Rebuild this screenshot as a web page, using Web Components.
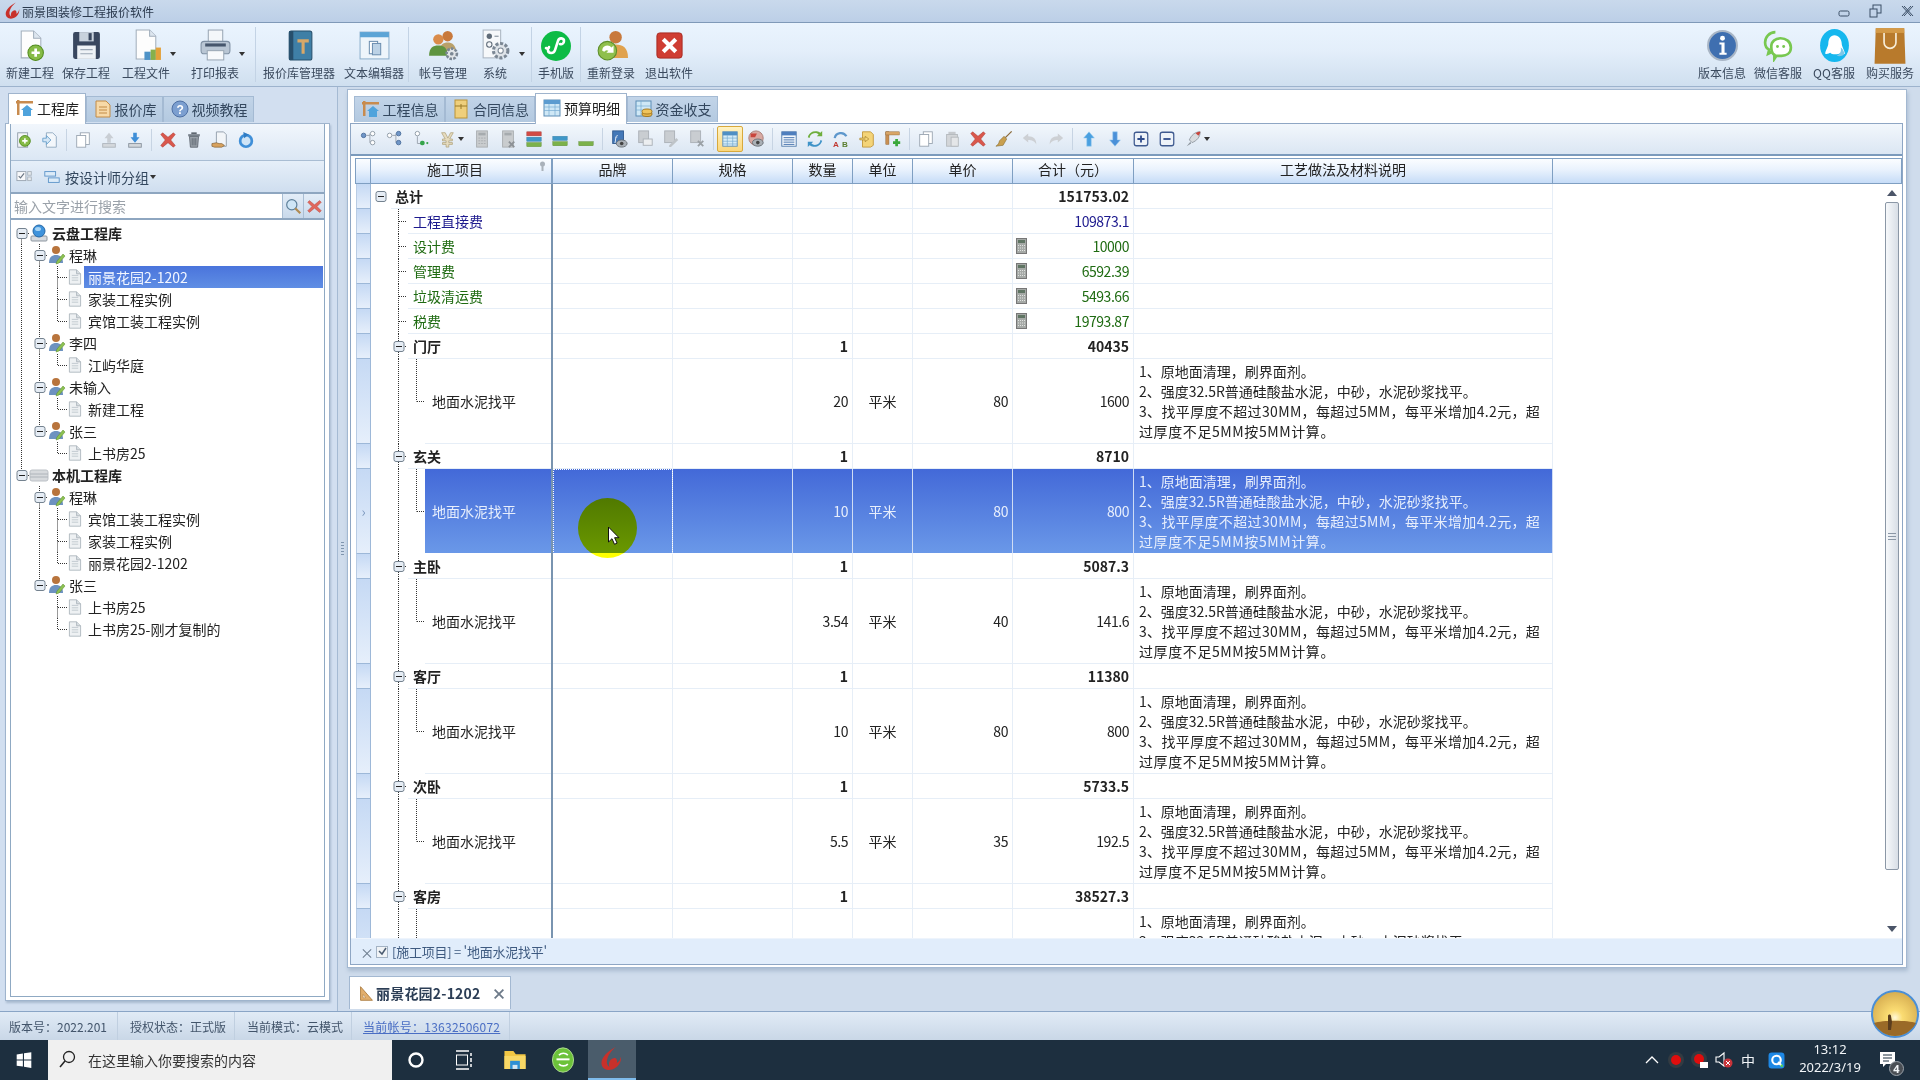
<!DOCTYPE html>
<html lang="zh">
<head>
<meta charset="utf-8">
<title>丽景图装修工程报价软件</title>
<style>
  html, body { margin: 0; height: 100%; overflow: hidden; }
  body {
    width: 1920px; height: 1080px;
    display: flex; flex-direction: column;
    font-family: "Noto Sans CJK SC", "Noto Sans", sans-serif;
    font-size: 14px;
    color: #222;
    background: #cfdcec;
  }
  .main { display: flex; height: 924px; }
</style>
</head>
<body>
<app-titlebar></app-titlebar>
<app-ribbon></app-ribbon>
<div class="main">
  <side-pane></side-pane>
  <pane-splitter></pane-splitter>
  <work-pane></work-pane>
</div>
<status-bar></status-bar>
<task-bar></task-bar>
<desk-avatar></desk-avatar>

<script>
// icon table, everything drawn on a 32 box (big) or 20 box (small)
const BIG = {
  logo: `<path d="M21 1C11 6 3 14 3 21c0 7 7 10 13 8 7-2 12-9 11-16-.5 4-3 7-5 8 1-4-1-7-4-6-5 1-7 7-5 11-3-2-4-5-3-9 1-6 6-12 11-16z" fill="#c8312b"/>`,
  'new': `<path d="M7 2h12l7 7v19H7z" fill="#fdfdfd" stroke="#a3afbc"/><path d="M19 2v7h7" fill="#dde6ef" stroke="#a3afbc"/><circle cx="21" cy="23" r="7.5" fill="#86bb46" stroke="#4f8a1c"/><path d="M21 19v8M17 23h8" stroke="#fff" stroke-width="2.6"/>`,
  save: `<rect x="3" y="3" width="26" height="26" rx="2" fill="#39475f"/><rect x="9" y="3" width="14" height="9" fill="#c8d2dd"/><rect x="18" y="4" width="3" height="7" fill="#39475f"/><rect x="7" y="16" width="18" height="13" fill="#eef2f6"/><path d="M10 20h12M10 24h12" stroke="#9aa6b4"/>`,
  file: `<path d="M6 1h13l6 6v22H6z" fill="#fdfdfd" stroke="#a3afbc"/><path d="M19 1v6h6" fill="#dde6ef" stroke="#a3afbc"/><rect x="14" y="22" width="6" height="8" fill="#4f93c7"/><rect x="20" y="20" width="5" height="10" fill="#86b04a"/><rect x="25" y="18" width="5" height="12" fill="#e3a13a"/>`,
  print: `<rect x="9" y="1" width="14" height="12" fill="#f4f7fa" stroke="#9aa7b5"/><rect x="2" y="12" width="28" height="12" rx="3" fill="#b9c6d4" stroke="#7e8fa2"/><rect x="6" y="14" width="20" height="3" fill="#46566c"/><rect x="8" y="21" width="16" height="9" fill="#f8fafc" stroke="#9aa7b5"/>`,
  book: `<rect x="6" y="2" width="22" height="28" rx="2" fill="#3f7fa6" stroke="#27506c"/><rect x="6" y="2" width="4" height="28" fill="#274f6c"/><path d="M14 10h11v3h-4v11h-3V13h-4z" fill="#d8a868"/>`,
  text: `<rect x="2" y="3" width="28" height="26" fill="#eef5fb" stroke="#8eb0cc"/><rect x="2" y="3" width="28" height="5" fill="#5ca4d6"/><rect x="11" y="12" width="8" height="12" fill="#fff" stroke="#6d8fb0"/><rect x="14" y="14" width="8" height="11" fill="#bcd2e6" stroke="#6d8fb0"/>`,
  users: `<circle cx="20" cy="7" r="5" fill="#c8793c"/><path d="M12 22c0-7 4-9 8-9s8 2 8 9z" fill="#b9a06a"/><circle cx="11" cy="10" r="5" fill="#d98b4a"/><path d="M2 26c0-8 4-10 9-10s9 2 9 10z" fill="#5f9440"/><circle cx="24" cy="24" r="5" fill="#e2e5e8" stroke="#7b8794" stroke-width="2.5" stroke-dasharray="2.5 1.2"/><circle cx="24" cy="24" r="1.8" fill="#7b8794"/>`,
  sys: `<rect x="4" y="1" width="17" height="27" fill="#f6f8fa" stroke="#aab5c1"/><circle cx="10" cy="7" r="2.6" fill="#5f6b78"/><path d="M15 7h4" stroke="#7b8794"/><circle cx="10" cy="15" r="2.6" fill="none" stroke="#5f6b78"/><circle cx="21" cy="21" r="7" fill="#dfe4e9" stroke="#7b8794" stroke-width="3" stroke-dasharray="3 1.6"/><circle cx="21" cy="21" r="2.5" fill="#fff" stroke="#7b8794"/>`,
  mini: `<circle cx="16" cy="16" r="15" fill="#0dbb45"/><path d="M10 20c0 4 6 4 7 0l3-9c1-4 6-3 6 0 0 2-2 4-4 3M8 18c2 1 3 0 3-1" fill="none" stroke="#fff" stroke-width="2.6" stroke-linecap="round" transform="translate(-2 0)"/>`,
  relogin: `<circle cx="20" cy="8" r="6" fill="#c8793c"/><path d="M8 28c0-10 5-13 12-13s12 3 12 13z" fill="#e0a24e"/><circle cx="12" cy="21" r="9" fill="#8fbf4d" stroke="#5d8e2a"/><path d="M7 21a5 5 0 0 1 9-3l2-2v7h-7l2-2a3 3 0 0 0-4 1z" fill="#fff"/>`,
  exit: `<rect x="3" y="3" width="26" height="26" rx="3" fill="#cf3d33" stroke="#a82a22"/><path d="M11 8l5 5 5-5 3 3-5 5 5 5-3 3-5-5-5 5-3-3 5-5-5-5z" fill="#fff"/>`,
  info: `<circle cx="16" cy="16" r="14" fill="#3f6fb0" stroke="#a9b6c6" stroke-width="2"/><circle cx="16" cy="9" r="2.4" fill="#fff"/><path d="M13 13h5v10h2v2h-7v-2h2v-8h-2z" fill="#fff"/>`,
  wechat: `<path d="M13 3C7 3 3 8 3 13c0 3 2 6 4 7l-1 4 4-2" fill="none" stroke="#78c850" stroke-width="2.6"/><path d="M9 17c0-5 4-8 9-8s10 3 10 9-5 8-9 8h-5l-2 3v-4c-2-1-3-5-3-8z" fill="#fff" stroke="#78c850" stroke-width="2.6"/><circle cx="15" cy="17" r="1.4" fill="#78c850"/><circle cx="21" cy="17" r="1.4" fill="#78c850"/>`,
  qq: `<ellipse cx="16" cy="16" rx="14" ry="16" fill="#16b7ee"/><path d="M16 6c-4 0-6 4-6 8 0 3-3 7-3 10 2 1 4-1 5-1 1 2 8 2 10 0 1 0 3 2 4 1 0-3-3-7-3-10 0-4-3-8-7-8z" fill="#fff"/><path d="M18 26c3-1 5-4 4-8 3 2 4 6 3 7-1 1-4 2-7 1z" fill="#7cc7e8"/>`,
  bag: `<path d="M4 1h24l1 30H3z" fill="#b87a2c"/><path d="M4 1h24v4H4z" fill="#d49a48"/><path d="M11 5v8a5 5 0 0 0 10 0V5" fill="none" stroke="#f7edd8" stroke-width="1.4"/>`,
  win: `<path d="M3 6l11-1.600V15H3zM16 4.100L29 2v13H16zM3 17h11v10.600L3 26zM16 17h13v13l-13-2z" fill="#fff"/>`,
  folder: `<path d="M3 5h11l3 4h12v18H3z" fill="#f2c744"/><rect x="3" y="11" width="26" height="16" fill="#f8d866"/><rect x="10" y="17" width="12" height="10" fill="#2d8fd5"/><rect x="13" y="22" width="6" height="5" fill="#d5e6f2"/>`,
  browser: `<ellipse cx="16" cy="16" rx="13" ry="15" fill="#6cc23a" stroke="#bfe8a0"/><rect x="8" y="14" width="16" height="2.400" fill="#fff"/><path d="M11 10c3-3 8-3 11 0M11 21c3 3 8 3 11 0" fill="none" stroke="#fff" stroke-width="2"/>`,
  q: `<rect x="1" y="1" width="30" height="30" rx="6" fill="#1e88e5"/><circle cx="16" cy="15" r="8" fill="none" stroke="#fff" stroke-width="4"/><path d="M19 19l6 6" stroke="#fff" stroke-width="4"/><circle cx="26" cy="26" r="2.500" fill="#57d357"/>`
};
const SMALL = {
  addtree: `<rect x="3" y="2" width="11" height="16" fill="#f4f6f8" stroke="#8f9ba8"/><circle cx="11" cy="11" r="6" fill="#86bb46" stroke="#4f8a1c"/><path d="M11 8v6M8 11h6" stroke="#fff" stroke-width="1.800"/>`,
  importf: `<path d="M6 2h7l4 4v12H6z" fill="#f3f7fb" stroke="#8fa8c0"/><path d="M2 8h4V5l5 5-5 5v-3H2z" fill="#d3e6f6" stroke="#6aa0cc"/>`,
  pages: `<rect x="7" y="2" width="10" height="13" fill="#fff" stroke="#9aa5b1"/><rect x="3" y="5" width="10" height="13" fill="#fff" stroke="#9aa5b1"/>`,
  upg: `<path d="M10 2l5 6h-3v5H8V8H5z" fill="#c9ced4"/><rect x="3" y="14" width="14" height="4" fill="#d4d8dc" stroke="#aeb5bc"/>`,
  downb: `<path d="M10 13l5-6h-3V2H8v5H5z" fill="#3f8fd8"/><rect x="3" y="14" width="14" height="4" fill="#d4d8dc" stroke="#87919c"/>`,
  del: `<path d="M4 2l6 5 6-5 2 2-5 6 5 6-2 2-6-5-6 5-2-2 5-6-5-6z" fill="#d9574c" stroke="#ad3a31" stroke-width=".6"/>`,
  trash: `<rect x="7" y="1.500" width="6" height="2" fill="#5f6770"/><rect x="3.500" y="3.500" width="13" height="2.500" fill="#7b848d"/><path d="M5 6h10l-1 12H6z" fill="#9aa2aa" stroke="#5f6770"/><path d="M8 8v8M10 8v8M12 8v8" stroke="#5f6770"/>`,
  share: `<path d="M6 1h8l3 3v13H6z" fill="#f2f5f8" stroke="#8f9ba8"/><path d="M1 14l5-1 3 1h3l3 2-3 2H4l-3-1z" fill="#d8a25e" stroke="#6a4a22" stroke-width=".6"/>`,
  refresh: `<circle cx="10" cy="11" r="6.500" fill="#cfe4f6" stroke="#3f8fd8" stroke-width="3"/><path d="M7 1l6 3-5 4z" fill="#2f7cc4"/>`,
  check: `<rect x="1" y="4" width="10" height="10" fill="#f7f8fa" stroke="#98a3af"/><path d="M3 9l2 2 4-5" fill="none" stroke="#6b7683" stroke-width="1.300"/><rect x="13" y="4" width="4" height="4" fill="#e5e9ed" stroke="#a9b2bc"/><rect x="13" y="10" width="4" height="4" fill="#e5e9ed" stroke="#a9b2bc"/>`,
  group: `<rect x="2" y="4" width="12" height="5" fill="#dcebf8" stroke="#5b93c8"/><rect x="6" y="11" width="12" height="5" fill="#dcebf8" stroke="#5b93c8"/>`,
  search: `<circle cx="8" cy="8" r="6" fill="#cfe6f7" stroke="#5d7f99" stroke-width="1.400"/><path d="M12 12l6 6" stroke="#b08a52" stroke-width="2.600"/>`,
  xred: `<path d="M4 3l6 5 6-5 2 2-5 5 5 5-2 2-6-5-6 5-2-2 5-5-5-5z" fill="#e0685e" stroke="#b0463d" stroke-width=".5"/>`,
  cloud: `<rect x="2" y="13" width="16" height="5" rx="1" fill="#d6dadf" stroke="#8d969f"/><circle cx="10" cy="8" r="6" fill="#3f93dc" stroke="#2568a6"/><ellipse cx="9" cy="6" rx="3" ry="2" fill="#a6d4f5"/>`,
  hdd: `<rect x="1" y="5" width="18" height="11" rx="2" fill="#d7dadd" stroke="#bcc1c6"/><path d="M1 9h18M1 12h18" stroke="#aeb4ba"/>`,
  person: `<circle cx="9" cy="5" r="4" fill="#b8743c"/><path d="M2 18c0-6 3-8 7-8s7 2 7 8z" fill="#6d92c0"/><path d="M10 16l6-7 2 2-6 7-3 1z" fill="#8cc152" stroke="#5a8a28" stroke-width=".5"/>`,
  doc: `<path d="M3 1h9l5 5v13H3z" fill="#eef1f3" stroke="#a5aeb6"/><path d="M12 1v5h5" fill="#dadfe3" stroke="#a5aeb6"/><path d="M6 8h8M6 11h8M6 14h8" stroke="#b9c1c8"/>`,
  ft1: `<circle cx="4" cy="6" r="2.500" fill="#6f96c8" stroke="#4d6f9c"/><path d="M7 6h4M11 4v10h2" fill="none" stroke="#98a2ad"/><circle cx="14" cy="4" r="2.500" fill="#fff" stroke="#8b97a3"/><circle cx="14" cy="14" r="2.500" fill="#fff" stroke="#8b97a3"/>`,
  ft2: `<circle cx="4" cy="6" r="2.500" fill="#fff" stroke="#8b97a3"/><path d="M7 6h4M11 4v10h2" fill="none" stroke="#98a2ad"/><circle cx="14" cy="4" r="2.500" fill="#6f96c8" stroke="#4d6f9c"/><circle cx="14" cy="14" r="2.500" fill="#6f96c8" stroke="#4d6f9c"/>`,
  ft3: `<circle cx="6" cy="4" r="2.500" fill="#fff" stroke="#8b97a3"/><path d="M6 7v8h4" fill="none" stroke="#98a2ad"/><rect x="9" y="12" width="5" height="5" rx="2" fill="#35a44a"/><circle cx="17" cy="14.500" r="1.200" fill="#35a44a"/>`,
  yen: `<path d="M4 3l4 7H5v2h4v2H5v2h4v3h3v-3h4v-2h-4v-2h4v-2h-3l4-7h-3l-3 6-3-6z" fill="#e6dcc0" stroke="#a8986a" stroke-width=".7"/>`,
  calc: `<rect x="4" y="1" width="12" height="18" fill="#c9ccce" stroke="#a9adb0"/><rect x="6" y="3" width="8" height="3" fill="#a6abae"/><path d="M6 9h8M6 12h8M6 15h8" stroke="#a9adb0" stroke-dasharray="2 1"/>`,
  calcx: `<rect x="4" y="1" width="12" height="18" fill="#c9ccce" stroke="#a9adb0"/><rect x="6" y="3" width="8" height="3" fill="#a6abae"/><path d="M11 13l6 6M17 13l-6 6" stroke="#8c9196" stroke-width="2"/>`,
  bars3: `<rect x="2" y="2" width="16" height="4.500" fill="#d24a44" stroke="#a53a34" stroke-width=".5"/><rect x="2" y="8" width="16" height="4.500" fill="#3f97c8" stroke="#2f7aa4" stroke-width=".5"/><rect x="2" y="14" width="16" height="4.500" fill="#7cb24a" stroke="#5c8c30" stroke-width=".5"/>`,
  bars2: `<rect x="2" y="7" width="16" height="4.500" fill="#3f97c8" stroke="#2f7aa4" stroke-width=".5"/><rect x="2" y="13" width="16" height="4.500" fill="#7cb24a" stroke="#5c8c30" stroke-width=".5"/>`,
  bars1: `<rect x="2" y="13" width="16" height="4.500" fill="#7cb24a" stroke="#5c8c30" stroke-width=".5"/>`,
  fx: `<rect x="3" y="1" width="12" height="14" fill="#4378b8" stroke="#2f5a90"/><text x="5" y="12" font-size="10" font-style="italic" fill="#fff" font-family="Liberation Serif">f</text><ellipse cx="13" cy="15" rx="6" ry="4" fill="#aab0b6" stroke="#666d74"/><circle cx="13" cy="15" r="2" fill="#444"/>`,
  fxa: `<rect x="3" y="1" width="11" height="13" fill="#c9cdd1" stroke="#aab0b6"/><rect x="8" y="10" width="10" height="7" fill="#eceef0" stroke="#aab0b6"/>`,
  fxb: `<rect x="3" y="1" width="11" height="13" fill="#c9cdd1" stroke="#aab0b6"/><path d="M8 17l8-8 2 2-8 8H8z" fill="#bfc4c8"/>`,
  fxc: `<rect x="3" y="1" width="11" height="13" fill="#c9cdd1" stroke="#aab0b6"/><path d="M11 12l6 6M17 12l-6 6" stroke="#9ba1a6" stroke-width="2"/>`,
  gridt: `<rect x="2" y="2" width="16" height="16" fill="#d5ecf8" stroke="#5d8db6"/><rect x="2" y="2" width="16" height="4" fill="#4f8fc4"/><path d="M2 9h16M2 12.500h16M2 15.500h16M7 6v12M13 6v12" stroke="#6fa5ce" stroke-width=".7"/>`,
  eye: `<circle cx="10" cy="9" r="8" fill="#d8a9a2" stroke="#a57a74"/><path d="M4 4h7l-2 4H4z" fill="#c9453c"/><ellipse cx="12" cy="14" rx="6" ry="4" fill="#aab0b6" stroke="#666d74"/><circle cx="12" cy="14" r="2" fill="#444"/>`,
  list: `<rect x="2" y="2" width="16" height="16" fill="#f5f9fd" stroke="#4d78aa"/><rect x="2" y="2" width="16" height="4" fill="#4f7fbe"/><path d="M4 8.500h12M4 11h12M4 13.500h12M4 16h12" stroke="#3a6aa8"/>`,
  sync: `<path d="M4 9a6 6 0 0 1 10-4l-2 2h6V1l-2 2A9 9 0 0 0 2 8z" fill="#6eae3c"/><path d="M16 11a6 6 0 0 1-10 4l2-2H2v6l2-2a9 9 0 0 0 14-5z" fill="#3f93c8"/>`,
  ab: `<path d="M3 9a7 7 0 0 1 13-2" fill="none" stroke="#5d97cc" stroke-width="2.500"/><text x="1" y="19" font-size="9" font-weight="700" fill="#c03a32" font-family="Liberation Sans">A</text><text x="11" y="19" font-size="9" font-weight="700" fill="#5a7e2e" font-family="Liberation Sans">B</text>`,
  fold: `<path d="M5 2h9l3 3v12l-3 2H5z" fill="#f4d478" stroke="#c2973a"/><path d="M2 9h6V7l4 3-4 3v-2H2z" fill="#f4d478" stroke="#a07c28" stroke-width=".7"/>`,
  plank: `<rect x="2" y="2" width="3.500" height="14" fill="#c98f52" stroke="#8f6232" stroke-width=".5"/><rect x="2" y="2" width="15" height="3.500" fill="#d9a668" stroke="#8f6232" stroke-width=".5"/><path d="M14 10v8M10 14h8" stroke="#3aa83a" stroke-width="3"/>`,
  paste: `<rect x="6" y="2" width="8" height="4" fill="#c5c9cd"/><rect x="4" y="5" width="12" height="13" fill="#d3d6d9" stroke="#b4b9bd"/><rect x="9" y="8" width="8" height="10" fill="#e4e6e8" stroke="#b4b9bd"/>`,
  broom: `<path d="M18 1l1 1-7 7-1-1z" fill="#8a6a3a"/><path d="M10 7l3 3-4 7-8 1c3-2 3-3 4-6z" fill="#c9a050" stroke="#7f6226" stroke-width=".6"/>`,
  undo: `<path d="M8 4L2 9l6 5v-3c4 0 7 1 9 5 0-6-3-9-9-9z" fill="#cdd0d4"/>`,
  redo: `<path d="M12 4l6 5-6 5v-3c-4 0-7 1-9 5 0-6 3-9 9-9z" fill="#cdd0d4"/>`,
  up: `<path d="M10 2l6 7h-3.500v9h-5V9H4z" fill="#4aa0e0" stroke="#9accf0" stroke-width=".6"/>`,
  down: `<path d="M10 18l6-7h-3.500V2h-5v9H4z" fill="#4a90d8" stroke="#9accf0" stroke-width=".6"/>`,
  plus: `<rect x="2.500" y="2.500" width="15" height="15" rx="2.500" fill="#eef3f9" stroke="#3f5a90" stroke-width="1.400"/><path d="M10 6v8M6 10h8" stroke="#2f4c8c" stroke-width="2"/>`,
  minus: `<rect x="2.500" y="2.500" width="15" height="15" rx="2.500" fill="#eef3f9" stroke="#3f5a90" stroke-width="1.400"/><path d="M6 10h8" stroke="#2f4c8c" stroke-width="2"/>`,
  rocket: `<path d="M18 2c-6 0-10 4-12 9l3 3c5-2 9-6 9-12z" fill="#d8dce0" stroke="#8d959d"/><path d="M18 2c-2 0-3 .500-5 1.500l3 3C17 5 18 4 18 2z" fill="#c9453c"/><path d="M7 13l-4 5 5-3z" fill="#8d959d"/>`,
  ruler: `<path d="M3 2l14 16H3z" fill="#e2ae6c" stroke="#a8773a"/><path d="M6 11l3 4H6z" fill="#fff" stroke="#a8773a" stroke-width=".6"/>`
};
const TAB = {
  house: `<rect x="2" y="2" width="2.500" height="15" fill="#c88b4e"/><rect x="1" y="3" width="17" height="2.500" fill="#c88b4e"/><path d="M12 7l6 5h-2v6H8v-6H6z" fill="#4fa3dc"/>`,
  quote: `<path d="M3 2h10l4 4v12H3z" fill="#f7d9a8" stroke="#c28b46"/><path d="M6 8h8M6 11h8M6 14h8" stroke="#c28b46"/>`,
  help: `<circle cx="10" cy="10" r="8" fill="#7c9fd0" stroke="#4f70a4"/><text x="6.500" y="14.500" font-size="12" font-weight="700" fill="#fff" font-family="Liberation Sans">?</text>`,
  env: `<rect x="4" y="1" width="12" height="18" fill="#efcf7c" stroke="#bc9436"/><path d="M4 7h12M10 5v5" stroke="#9a7a28"/>`,
  table: `<rect x="2" y="2" width="16" height="16" fill="#cfe8f6" stroke="#5d8db6"/><rect x="2" y="2" width="16" height="4" fill="#5c9cd0"/><path d="M2 9h16M2 12.500h16M7 6v12M13 6v12" stroke="#77acd2" stroke-width=".7"/>`,
  money: `<rect x="2" y="2" width="15" height="15" fill="#cfe8f6" stroke="#5d8db6"/><path d="M2 7h15M2 11h15M7 2v15" stroke="#77acd2" stroke-width=".7"/><ellipse cx="13" cy="15" rx="5" ry="2.500" fill="#e8b64c" stroke="#a67a20"/><ellipse cx="13" cy="12.500" rx="5" ry="2.500" fill="#f0c45c" stroke="#a67a20"/>`
};

class UiIcon extends HTMLElement {
  constructor() {
    super();
    this.attachShadow({mode: 'open'});
  }
  connectedCallback() {
    const name = this.getAttribute('name');
    const size = this.getAttribute('size') || 20;
    const box = BIG[name] ? 32 : 20;
    const body = BIG[name] || SMALL[name] || TAB[name] || '';
    this.shadowRoot.innerHTML = `<style>:host{display:inline-flex;flex:none;width:${size}px;height:${size}px}svg{display:block}</style>
      <svg width="${size}" height="${size}" viewBox="0 0 ${box} ${box}">${body}</svg>`;
  }
}
customElements.define('ui-icon', UiIcon);

// tree connectors for the left tree and the budget grid
function connector(w, h, parts, box) {
  const mid = Math.floor(h / 2) + .5;
  let s = '';
  parts.forEach(p => {
    const y1 = p.from === 'mid' ? mid : 0;
    const y2 = p.to === 'mid' ? mid : h;
    if (p.x !== undefined) s += `<path d="M${p.x + .5} ${y1}V${y2}" stroke="#333" stroke-dasharray="1 1"/>`;
    if (p.hx !== undefined) s += `<path d="M${p.hx} ${mid}H${p.hx2}" stroke="#333" stroke-dasharray="1 1"/>`;
  });
  if (box !== undefined) {
    s += `<rect x="${box - 4}" y="${mid - 5}" width="10" height="10" rx="2" fill="#e6edf5" stroke="#74828f"/>
          <path d="M${box - 2} ${mid}h6" stroke="#222"/>`;
  }
  return `<svg width="${w}" height="${h}" style="display:block;flex:none">${s}</svg>`;
}

class AppTitlebar extends HTMLElement {
  constructor() {
    super();
    this.attachShadow({mode: 'open'});
    this.shadowRoot.innerHTML = `<style>
      :host { display: flex; align-items: center; height: 22px; flex: none; padding: 0 5px 0 4px;
              background: linear-gradient(#c9d9ec, #bccfe7); border-bottom: 1px solid #7f99b8; font-size: 12px; color: #2b3a4e; }
      span { flex: 1; }
      .btns { display: flex; gap: 15px; align-items: center; }
    </style>
    <ui-icon name="logo" size="18"></ui-icon><span>丽景图装修工程报价软件</span>
    <div class="btns">
      <svg width="16" height="16"><rect x="2" y="8" width="10" height="5" rx="1.500" fill="none" stroke="#3b4e66"/></svg>
      <svg width="16" height="16"><rect x="5" y="2" width="8" height="8" fill="none" stroke="#3b4e66"/><rect x="2" y="6" width="7" height="8" fill="#c2d3e9" stroke="#3b4e66"/></svg>
      <svg width="16" height="16"><path d="M3 3l9 10M12 3L3 13M5 3l9 10M14 3l-9 10" stroke="#3b4e66" fill="none"/></svg>
    </div>`;
  }
}
customElements.define('app-titlebar', AppTitlebar);

class RibbonBtn extends HTMLElement {
  constructor() {
    super();
    this.attachShadow({mode: 'open'});
  }
  connectedCallback() {
    const icon = this.getAttribute('icon');
    const w = this.getAttribute('w');
    const drop = this.hasAttribute('drop') ? '<i></i>' : '';
    const size = this.getAttribute('size') || 33;
    this.shadowRoot.innerHTML = `<style>
      :host { display: flex; flex-direction: column; align-items: center; width: ${w}px; flex: none; }
      .ic { height: 39px; display: flex; align-items: center; position: relative; margin-top: 3px; }
      i { position: absolute; right: -13px; bottom: 9px; border: 3px solid transparent; border-top: 4px solid #333; border-bottom: 0; }
      .lb { font-size: 12px; line-height: 16px; color: #3b4a5e; white-space: nowrap; }
    </style>
    <div class="ic"><ui-icon name="${icon}" size="${size}"></ui-icon>${drop}</div>
    <div class="lb"><slot></slot></div>`;
  }
}
customElements.define('ribbon-btn', RibbonBtn);

class AppRibbon extends HTMLElement {
  constructor() {
    super();
    this.attachShadow({mode: 'open'});
    this.shadowRoot.innerHTML = `<style>
      :host { display: flex; height: 64px; flex: none; padding: 0 2px 0 4px; box-sizing: border-box;
              background: linear-gradient(#eaf4fe, #e3eefa 45%, #cfdfef); border-bottom: 1px solid #9db3cd; }
      .sep { width: 1px; margin: 4px 1px; background: #c3d3e5; flex: none; }
      .gap { flex: 1; }
    </style>
    <ribbon-btn w="52" icon="new">新建工程</ribbon-btn>
    <ribbon-btn w="60" icon="save">保存工程</ribbon-btn>
    <ribbon-btn w="60" icon="file" drop>工程文件</ribbon-btn>
    <ribbon-btn w="78" icon="print" drop>打印报表</ribbon-btn>
    <div class="sep"></div>
    <ribbon-btn w="84" icon="book">报价库管理器</ribbon-btn>
    <ribbon-btn w="66" icon="text">文本编辑器</ribbon-btn>
    <div class="sep"></div>
    <ribbon-btn w="60" icon="users" style="margin-left:3px">帐号管理</ribbon-btn>
    <ribbon-btn w="44" icon="sys" drop>系统</ribbon-btn>
    <div class="sep" style="margin-left:14px"></div>
    <ribbon-btn w="46" icon="mini" size="32">手机版</ribbon-btn>
    <div class="sep"></div>
    <ribbon-btn w="58" icon="relogin">重新登录</ribbon-btn>
    <ribbon-btn w="58" icon="exit" size="31">退出软件</ribbon-btn>
    <div class="gap"></div>
    <ribbon-btn w="56" icon="info">版本信息</ribbon-btn>
    <ribbon-btn w="56" icon="wechat">微信客服</ribbon-btn>
    <ribbon-btn w="56" icon="qq">QQ客服</ribbon-btn>
    <ribbon-btn w="56" icon="bag" size="38">购买服务</ribbon-btn>`;
  }
}
customElements.define('app-ribbon', AppRibbon);

class TabBar extends HTMLElement {
  constructor() {
    super();
    this.attachShadow({mode: 'open'});
  }
  connectedCallback() {
    const tabs = JSON.parse(this.getAttribute('tabs'));
    this.shadowRoot.innerHTML = `<style>
      :host { display: flex; align-items: flex-end; height: 30px; flex: none; font-size: 14px; color: #33475e; }
      .t { display: flex; align-items: center; justify-content: center; gap: 2px; height: 26px; box-sizing: border-box; flex: none; padding-bottom: 1px;
           background: linear-gradient(#c2d4e8, #b3c9e0); border: 1px solid #a4bad3; border-bottom: 0; margin-bottom: 1px; }
      .t.on { height: 31px; margin-bottom: -1px; padding-bottom: 3px; background: #fff; border-color: #9fb4cd; color: #222; position: relative; }
    </style>` + tabs.map(t => `<div class="t ${t.on ? 'on' : ''}" style="width:${t.w}px"><ui-icon name="${t.i}" size="20"></ui-icon>${t.l}</div>`).join('');
  }
}
customElements.define('tab-bar', TabBar);

class IconTools extends HTMLElement {
  constructor() {
    super();
    this.attachShadow({mode: 'open'});
  }
  connectedCallback() {
    const items = this.getAttribute('items').split(' ');
    const html = items.map(n => {
      if (n === '|') return '<b></b>';
      if (n.startsWith('*')) return `<span class="on"><ui-icon name="${n.slice(1)}" size="18"></ui-icon></span>`;
      if (n.endsWith('^')) return `<span class="dd"><ui-icon name="${n.slice(0, -1)}" size="18"></ui-icon><i></i></span>`;
      return `<span><ui-icon name="${n}" size="18"></ui-icon></span>`;
    }).join('');
    this.shadowRoot.innerHTML = `<style>
      :host { display: flex; align-items: center; }
      span { width: 26px; height: 26px; display: flex; align-items: center; justify-content: center; flex: none; }
      span.dd { width: 35px; justify-content: flex-start; padding-left: 4px; box-sizing: border-box; gap: 2px; }
      span.on { background: linear-gradient(#fff3c4, #fbd77c); border: 1px solid #d8a93c; border-radius: 2px; box-sizing: border-box; }
      b { width: 1px; height: 22px; background: #c7d4e3; margin: 0 3px 0 3px; flex: none; }
      i { border: 3px solid transparent; border-top: 4px solid #333; border-bottom: 0; }
    </style>` + html;
  }
}
customElements.define('icon-tools', IconTools);

class SideTree extends HTMLElement {
  constructor() {
    super();
    this.attachShadow({mode: 'open'});
    const data = [
      [0, '云盘工程库'], [1, '程琳'], [2, '丽景花园2-1202', 1], [2, '家装工程实例'], [2, '宾馆工装工程实例'],
      [1, '李四'], [2, '江屿华庭'], [1, '未输入'], [2, '新建工程'], [1, '张三'], [2, '上书房25'],
      [0, '本机工程库'], [1, '程琳'], [2, '宾馆工装工程实例'], [2, '家装工程实例'], [2, '丽景花园2-1202'],
      [1, '张三'], [2, '上书房25'], [2, '上书房25-刚才复制的']
    ];
    const X = [10, 28, 46];
    const nextSib = (i, lvl) => {
      for (let j = i + 1; j < data.length; j++) {
        if (data[j][0] < lvl) return false;
        if (data[j][0] === lvl) return true;
      }
      return false;
    };
    const rows = data.map((r, i) => {
      const lvl = r[0];
      const parts = [];
      // ancestor verticals that run through this row
      for (let k = 0; k < lvl; k++) {
        let a = i;
        while (data[a][0] !== k) a--;
        if (nextSib(a, k)) parts.push({x: X[k]});
      }
      if (!(lvl === 0 && i === 0)) parts.push({x: X[lvl], to: 'mid'});
      if (nextSib(i, lvl)) parts.push({x: X[lvl], from: 'mid'});
      parts.push({hx: X[lvl] + 1, hx2: X[lvl] + 10});
      const w = [18, 36, 56][lvl];
      const gut = connector(w, 22, parts, lvl < 2 ? X[lvl] : undefined);
      const icon = lvl === 0 ? (i === 0 ? 'cloud' : 'hdd') : lvl === 1 ? 'person' : 'doc';
      return `<div class="r l${lvl}">${gut}<ui-icon name="${icon}" size="${lvl === 2 ? 16 : 20}"></ui-icon><span class="${r[2] ? 'sel' : ''}">${r[1]}</span></div>`;
    }).join('');
    this.shadowRoot.innerHTML = `<style>
      :host { display: block; flex: 1; background: #fff; font-size: 14px; color: #222; padding-top: 2px; overflow: hidden; }
      .r { display: flex; align-items: center; height: 22px; }
      .r.l0 span { font-weight: 700; margin-left: 3px; }
      .r.l1 span { margin-left: 2px; }
      .r.l2 span { margin-left: 1px; padding-left: 4px; flex: 1; line-height: 22px; margin-right: 1px; }
      span.sel { background: linear-gradient(#4a74dc, #5f8ee4); color: #f2f6ff; }
    </style>${rows}`;
  }
}
customElements.define('side-tree', SideTree);

class SidePane extends HTMLElement {
  constructor() {
    super();
    this.attachShadow({mode: 'open'});
    this.shadowRoot.innerHTML = `<style>
      :host { display: flex; flex-direction: column; width: 338px; box-sizing: border-box; flex: none; padding: 6px 0 10px 5px;
              border-right: 1px solid #a5bad3; background: #d2dff0; }
      tab-bar { margin-left: 3px; }
      .panel { flex: 1; width: 325px; box-sizing: border-box; display: flex; flex-direction: column; background: #fff; border: 1px solid #9fb4cd; padding: 0 4px 3px 4px; box-shadow: 1px 2px 2px #a9bbd0; }
      .inner { flex: 1; display: flex; flex-direction: column; border: 1px solid #8fa9c3; border-top: 0; min-height: 0; }
      .tools { height: 37px; box-sizing: border-box; padding-bottom: 5px; display: flex; background: linear-gradient(#f1f6fc, #dbe7f4); border-bottom: 1px solid #a9bdd3; flex: none; }
      .group { height: 33px; display: flex; align-items: center; gap: 5px; padding-left: 5px; box-sizing: border-box; background: linear-gradient(#e6eff9, #cfdeef); border-bottom: 2px solid #8ea6c0; flex: none; font-size: 14px; color: #33475e; }
      .group ui-icon + ui-icon { margin-left: 4px; margin-right: -1px; }
      .group i { border: 3px solid transparent; border-top: 4px solid #333; border-bottom: 0; margin-left: -4px; }
      .find { height: 26px; display: flex; border-bottom: 2px solid #8ea6c0; box-sizing: border-box; flex: none; }
      .find div { flex: 1; line-height: 24px; padding-left: 3px; color: #9aa1a9; background: #fff; }
      .find span { width: 20px; display: flex; align-items: center; justify-content: center; background: linear-gradient(#e3edf8, #c9d9eb); border-left: 1px solid #a9bdd3; }
    </style>
    <tab-bar tabs='[{"l":"工程库","i":"house","w":78,"on":1},{"l":"报价库","i":"quote","w":77},{"l":"视频教程","i":"help","w":91}]'></tab-bar>
    <div class="panel"><div class="inner">
      <div class="tools"><icon-tools items="addtree importf | pages upg downb | del trash share refresh"></icon-tools></div>
      <div class="group"><ui-icon name="check" size="18"></ui-icon><ui-icon name="group" size="18"></ui-icon>按设计师分组<i></i></div>
      <div class="find"><div>输入文字进行搜索</div><span><ui-icon name="search" size="17"></ui-icon></span><span><ui-icon name="xred" size="17"></ui-icon></span></div>
      <side-tree></side-tree>
    </div></div>`;
  }
}
customElements.define('side-pane', SidePane);

class PaneSplitter extends HTMLElement {
  constructor() {
    super();
    this.attachShadow({mode: 'open'});
    this.shadowRoot.innerHTML = `<style>
      :host { display: flex; align-items: center; justify-content: center; width: 9px; flex: none; }
      div { width: 3px; height: 14px; background: repeating-linear-gradient(#7f95ae 0 1px, transparent 1px 3px); }
    </style><div></div>`;
  }
}
customElements.define('pane-splitter', PaneSplitter);

const NOTE = '1、原地面清理，刷界面剂。<br>2、强度32.5R普通硅酸盐水泥，中砂，水泥砂浆找平。<br><span style="letter-spacing:.35px">3、找平厚度不超过30MM，每超过5MM，每平米增加4.2元，超</span><br><span style="letter-spacing:.6px">过厚度不足5MM按5MM计算。</span>';

class BudgetGrid extends HTMLElement {
  constructor() {
    super();
    this.attachShadow({mode: 'open'});
    const room = (name, total) => ({lvl: 1, exp: 1, name, qty: '1', total, bold: 1});
    const item = (qty, price, total, sel) => ({lvl: 2, name: '地面水泥找平', qty, unit: '平米', price, total, note: NOTE, sel});
    const rows = [
      {lvl: 0, exp: 1, name: '总计', total: '151753.02', bold: 1},
      {lvl: 1, name: '工程直接费', total: '109873.1', color: '#1d1a8e'},
      {lvl: 1, name: '设计费', total: '10000', color: '#1f6b12', calc: 1},
      {lvl: 1, name: '管理费', total: '6592.39', color: '#1f6b12', calc: 1},
      {lvl: 1, name: '垃圾清运费', total: '5493.66', color: '#1f6b12', calc: 1},
      {lvl: 1, name: '税费', total: '19793.87', color: '#1f6b12', calc: 1},
      room('门厅', '40435'), item('20', '80', '1600'),
      room('玄关', '8710'), item('10', '80', '800', 1),
      room('主卧', '5087.3'), item('3.54', '40', '141.6'),
      room('客厅', '11380'), item('10', '80', '800'),
      room('次卧', '5733.5'), item('5.5', '35', '192.5'),
      room('客房', '38527.3'),
      // cut by the filter bar: only the top of this row shows
      {lvl: 2, name: '', note: '1、原地面清理，刷界面剂。<br>2、强度32.5R普通硅酸盐水泥，中砂，水泥砂浆找平。', total: ''}
    ];
    const html = rows.map(r => {
      const h = r.lvl === 2 ? 85 : 25;
      const parts = [];
      let w, box;
      if (r.lvl === 0) { w = 20; box = 9; }
      if (r.lvl === 1) {
        w = 37;
        parts.push({x: 27});
        parts.push({hx: 28, hx2: 35});
        if (r.exp) box = 27;
      }
      if (r.lvl === 2) {
        w = 54;
        parts.push({x: 27});
        parts.push({x: 45, to: 'mid'});
        parts.push({hx: 46, hx2: 54});
      }
      const gut = connector(w, h, parts, box);
      const sty = r.color ? `color:${r.color}` : '';
      const cls = (r.bold ? ' b' : '');
      return `<div class="row ${r.sel ? 'sel' : ''}" style="height:${h}px">
        <div class="rh">${r.sel ? '<em>›</em>' : ''}</div>
        <div class="tree">${gut}<div class="nm l${r.lvl}${cls}" style="${sty}">${r.name}</div></div>
        <div class="c focus"></div>
        <div class="c"></div>
        <div class="c num${cls}">${r.qty || ''}</div>
        <div class="c ctr">${r.unit || ''}</div>
        <div class="c num">${r.price || ''}</div>
        <div class="c num${cls}" style="${sty}">${r.calc ? '<svg class="cal" width="11" height="16"><rect x=".5" y=".5" width="10" height="15" fill="#a5a9a6" stroke="#777"/><rect x="2" y="2" width="7" height="3" fill="#5f7463"/><path d="M2 7.500h7M2 10h7M2 12.500h7" stroke="#e2e4e2" stroke-dasharray="1 1"/></svg>' : ''}<span>${r.total}</span></div>
        <div class="c note">${r.note || ''}</div>
      </div>`;
    }).join('');
    const heads = ['', '施工项目', '品牌', '规格', '数量', '单位', '单价', '合计（元）', '工艺做法及材料说明', ''];
    this.shadowRoot.innerHTML = `<style>
      :host { display: flex; flex-direction: column; flex: 1; min-height: 0; position: relative; font-size: 14px; color: #222; }
      .hd, .row { display: grid; grid-template-columns: 15px 182px 120px 120px 60px 60px 100px 121px 419px; }
      .hd { grid-template-columns: 15px 182px 120px 120px 60px 60px 100px 121px 419px 1fr; height: 26px; flex: none; border: 1px solid #7f9fc2; box-sizing: border-box; width: 1547px; }
      .hd div { display: flex; align-items: center; justify-content: center; padding-bottom: 4px; box-sizing: border-box; background: linear-gradient(#fbfdff, #e9f2fd 45%, #c6dcf7); border-right: 1px solid #7f9fc2; position: relative; }
      .hd div:nth-child(2) { border-right-width: 2px; padding-right: 12px; }
      .hd div:last-child { border-right: 0; }
      .hd svg { position: absolute; right: 4px; top: 2px; }
      .body { flex: 1; display: flex; min-height: 0; overflow: hidden; padding-left: 1px; }
      .rows { width: 1197px; flex: none; }
      .rh { background: linear-gradient(#c5d9f4, #e6effb); border: 1px solid #9db8d8; border-top: 0; border-left-color: #b9cce4; box-sizing: border-box; display: flex; align-items: center; justify-content: center; }
      .rh em { font-style: normal; color: #7f9abf; font-size: 14px; }
      .tree { display: flex; border-right: 2px solid #7994b0; min-width: 0; }
      .nm { flex: 1; display: flex; align-items: center; border-bottom: 1px solid #e6eef7; white-space: nowrap; }
      .nm.l0 { padding-left: 4px; } .nm.l1 { padding-left: 5px; } .nm.l2 { padding-left: 7px; }
      .b { font-weight: 700; }
      .c { display: flex; align-items: center; border-right: 1px solid #e6eef7; border-bottom: 1px solid #e6eef7; min-width: 0; white-space: nowrap; }
      .num { justify-content: flex-end; padding-right: 4px; letter-spacing: -.45px; }
      .num.b { letter-spacing: 0; }
      .ctr { justify-content: center; }
      .cal { margin-right: auto; margin-left: 3px; }
      .note { display: block; line-height: 20px; padding: 2px 0 0 5px; border-right: 1px solid #e6eef7; color: #222; }
      .note:empty { padding: 0; }
      .sel .nm, .sel .c { background: linear-gradient(#4369d8, #6a98e8); color: #e7eefc; border-bottom-color: #fff; border-right-color: #cfdcf4; }
      .sel .focus { outline: 1px dotted #fff; outline-offset: -1px; }
      .bar { width: 18px; flex: none; margin-left: auto; display: flex; flex-direction: column; align-items: center; background: #fff; }
      .bar i { flex: none; height: 18px; width: 14px; display: flex; align-items: center; justify-content: center; }
      .bar i::before { content: ""; border: 5px solid transparent; }
      .bar i.u::before { border-bottom: 6px solid #4b5568; border-top: 0; }
      .bar i.d::before { border-top: 6px solid #4b5568; border-bottom: 0; }
      .thumb { height: 668px; width: 14px; box-sizing: border-box; border: 1px solid #8b97a6; border-radius: 2px; background: linear-gradient(90deg, #f7f9fb, #d8dee6); display: flex; align-items: center; justify-content: center; }
      .thumb::after { content: ""; width: 8px; height: 7px; background: repeating-linear-gradient(#8b97a6 0 1px, transparent 1px 3px); }
      .rest { flex: 1; }
      .spot { position: absolute; left: 223px; top: 340px; width: 59px; height: 60px; border-radius: 50%; background: #ffff00; mix-blend-mode: multiply; }
      .arrow { position: absolute; left: 252px; top: 368px; }
    </style>
    <div class="hd">${heads.map((t, i) => `<div>${t}${i === 1 ? '<svg width="9" height="11"><circle cx="4.500" cy="3" r="2.500" fill="#aab2ba"/><rect x="3.500" y="5" width="2" height="5" fill="#aab2ba"/></svg>' : ''}</div>`).join('')}</div>
    <div class="body">
      <div class="rows">${html}</div>
      <div class="bar"><i class="u"></i><div class="thumb"></div><div class="rest"></div><i class="d"></i></div>
    </div>
    <div class="spot"></div>
    <svg class="arrow" width="14" height="20"><path d="M1.500 1v15l3.500-3.300 2.500 5.600 2.600-1.200-2.500-5.400H12z" fill="#fff" stroke="#111"/></svg>`;
  }
}
customElements.define('budget-grid', BudgetGrid);

class WorkPane extends HTMLElement {
  constructor() {
    super();
    this.attachShadow({mode: 'open'});
    this.shadowRoot.innerHTML = `<style>
      :host { display: flex; flex-direction: column; flex: 1; min-width: 0; padding: 2px 13px 0 0; box-sizing: border-box; }
      .card { height: 879px; flex: none; box-sizing: border-box; background: #fff; border: 1px solid #a3b8d1; padding: 3px 3px 2px 2px; display: flex; flex-direction: column; box-shadow: 1px 3px 4px #a9bbd0; }
      tab-bar { margin-left: 4px; }
      .box { flex: 1; min-height: 0; display: flex; flex-direction: column; border: 1px solid #8ea6c4; background: #fff; padding: 0 1px 0 4px; }
      .tools { height: 32px; box-sizing: border-box; flex: none; display: flex; padding-left: 5px; margin: 0 -1px 0 -4px; background: linear-gradient(#f2f7fc, #dbe6f3); border-bottom: 2px solid #7b9abc; align-items: center; }
      .tools + div { height: 2px; flex: none; }
      .filter { height: 26px; flex: none; margin: 0 -1px 0 -4px; background: #e1edfb; display: flex; align-items: center; color: #3e5a80; font-size: 13px; padding-left: 9px; border-top: 1px solid #eef4fc; box-sizing: border-box; }
      .filter u { text-decoration: none; font-size: 14px; color: #6f7f90; width: 16px; }
      .chk { width: 12px; height: 12px; box-sizing: border-box; border: 1px solid #a4b3c4; background: #f0f3f6; display: flex; align-items: center; justify-content: center; margin-right: 4px; }
      .filter em { font-style: normal; white-space: pre; letter-spacing: -.25px; }
      .docs { margin: 8px 0 0 2px; height: 33px; width: 162px; box-sizing: border-box; background: #fff; border: 1px solid #a3b8d1; border-bottom: 0; display: flex; align-items: center; padding-left: 8px; gap: 1px; font-weight: 700; color: #2c3e56; flex: none; letter-spacing: .2px; }
      .docs b { margin-left: 10px; color: #6d7a89; font-size: 15px; }
    </style>
    <div class="card">
      <tab-bar tabs='[{"l":"工程信息","i":"house","w":91},{"l":"合同信息","i":"env","w":90},{"l":"预算明细","i":"table","w":92,"on":1},{"l":"资金收支","i":"money","w":91}]'></tab-bar>
      <div class="box">
        <div class="tools"><icon-tools items="ft1 ft2 ft3 yen^ calc calcx bars3 bars2 bars1 | fx fxa fxb fxc | *gridt eye | list sync ab fold plank | pages paste del broom undo redo | up down plus minus rocket^"></icon-tools></div>
        <div></div>
        <budget-grid></budget-grid>
        <div class="filter"><u>×</u><span class="chk"><svg width="9" height="9"><path d="M1 4l3 3 4-6" fill="none" stroke="#4a5b70" stroke-width="1.500"/></svg></span><em>[施工项目] = '地面水泥找平'</em></div>
      </div>
    </div>
    <div class="docs"><ui-icon name="ruler" size="17"></ui-icon>丽景花园2-1202<b>×</b></div>`;
  }
}
customElements.define('work-pane', WorkPane);

class StatusBar extends HTMLElement {
  constructor() {
    super();
    this.attachShadow({mode: 'open'});
    this.shadowRoot.innerHTML = `<style>
      :host { display: flex; height: 29px; flex: none; box-sizing: border-box; background: linear-gradient(#e1ebf6, #c9d7e7); border-top: 1px solid #8aa5c6; font-size: 12px; color: #42546a; }
      div { display: flex; align-items: center; padding-left: 9px; box-sizing: border-box; border-right: 1px solid #c0cfe0; white-space: nowrap; }
      a { color: #4a6ec4; text-decoration: underline; letter-spacing: .25px; }
    </style>
    <div style="width:118px">版本号：2022.201</div>
    <div style="width:117px;padding-left:12px">授权状态：正式版</div>
    <div style="width:117px;padding-left:12px">当前模式：云模式</div>
    <div style="width:158px;padding-left:11px"><a>当前帐号：13632506072</a></div>`;
  }
}
customElements.define('status-bar', StatusBar);

class TaskBar extends HTMLElement {
  constructor() {
    super();
    this.attachShadow({mode: 'open'});
    this.shadowRoot.innerHTML = `<style>
      :host { display: flex; align-items: stretch; height: 40px; flex: none; background: #1d2f3f; color: #f2f5f8; }
      .start { width: 48px; display: flex; align-items: center; justify-content: center; flex: none; }
      .search { width: 344px; flex: none; background: #f0f0f0; color: #333; display: flex; align-items: center; font-size: 14px; gap: 12px; padding-left: 10px; box-sizing: border-box; }
      .app { width: 48px; display: flex; align-items: center; justify-content: center; flex: none; box-sizing: border-box; }
      .app.on { background: #4a5c6b; border-bottom: 2px solid #7fbcec; margin-left: 1px; }
      .gap { flex: 1; }
      .tray { display: flex; align-items: center; flex: none; }
      .tray > span { width: 24px; display: flex; align-items: center; justify-content: center; flex: none; }
      .clock { width: 74px; text-align: center; font-size: 13px; line-height: 18px; font-family: "Noto Sans", sans-serif; margin: 0 0 0 1px; flex: none; }
      .note { width: 40px; height: 40px; display: flex; align-items: center; justify-content: center; flex: none; position: relative; margin-left: 1px; margin-right: 12px; }
      .note b { position: absolute; right: 4px; bottom: 4px; width: 15px; height: 15px; border-radius: 50%; background: #4a4f55; border: 1px solid #9aa2aa; box-sizing: border-box; font-size: 11px; line-height: 13px; text-align: center; font-family: "Noto Sans", sans-serif; }
    </style>
    <div class="start"><ui-icon name="win" size="18"></ui-icon></div>
    <div class="search"><svg width="18" height="20"><circle cx="11" cy="7" r="5.500" fill="none" stroke="#222" stroke-width="1.300"/><path d="M7 11l-5 6" stroke="#222" stroke-width="1.500"/></svg>在这里输入你要搜索的内容</div>
    <div class="app"><svg width="18" height="18"><circle cx="9" cy="9" r="6.500" fill="none" stroke="#fff" stroke-width="2.400"/></svg></div>
    <div class="app"><svg width="18" height="20"><path d="M1 1h13M1 19h13" stroke="#fff" stroke-width="1.500"/><rect x="1.500" y="5" width="11" height="10" fill="none" stroke="#fff"/><path d="M16 3v3M16 8v4M16 14v3" stroke="#fff" stroke-width="1.500"/></svg></div>
    <div class="app" style="margin-left:3px"><ui-icon name="folder" size="26"></ui-icon></div>
    <div class="app"><ui-icon name="browser" size="26"></ui-icon></div>
    <div class="app on"><ui-icon name="logo" size="26"></ui-icon></div>
    <div class="gap"></div>
    <div class="tray">
      <span><svg width="14" height="8"><path d="M1 7l6-6 6 6" fill="none" stroke="#fff" stroke-width="1.300"/></svg></span>
      <span><svg width="18" height="18"><circle cx="9" cy="9" r="8" fill="#333b42"/><circle cx="9" cy="9" r="5" fill="#e00d0d"/></svg></span>
      <span><svg width="18" height="18"><circle cx="8" cy="8" r="8" fill="#333b42"/><circle cx="8" cy="8" r="5" fill="#e00d0d"/><rect x="9" y="11" width="8" height="6" fill="#fff"/></svg></span>
      <span><svg width="18" height="18"><path d="M1 6h3l5-4v13l-5-4H1z" fill="none" stroke="#fff" stroke-width="1.100"/><circle cx="13" cy="12" r="4.500" fill="#c9343a"/><path d="M11 10l4 4M15 10l-4 4" stroke="#fff"/></svg></span>
      <span style="font-size:14px">中</span>
      <span style="width:32px"><ui-icon name="q" size="17"></ui-icon></span>
    </div>
    <div class="clock">13:12<br>2022/3/19</div>
    <div class="note"><svg width="18" height="18"><path d="M1 1h15v12H7l-3 3v-3H1z" fill="#fff"/><path d="M4 4h9M4 7h9M4 10h6" stroke="#1d2f3f"/></svg><b>4</b></div>`;
  }
}
customElements.define('task-bar', TaskBar);

class DeskAvatar extends HTMLElement {
  constructor() {
    super();
    this.attachShadow({mode: 'open'});
    this.shadowRoot.innerHTML = `<style>
      :host { position: absolute; left: 1871px; top: 990px; width: 48px; height: 48px; }
      svg { display: block; }
    </style>
    <svg width="48" height="48"><defs>
      <radialGradient id="s" cx=".5" cy=".58" r=".65"><stop offset="0" stop-color="#fff8d8"/><stop offset=".25" stop-color="#fbdc72"/><stop offset="1" stop-color="#cfa44a"/></radialGradient>
    </defs><circle cx="24" cy="24" r="23" fill="url(#s)" stroke="#4b8fd6" stroke-width="2"/>
    <path d="M3 33c8-3 34-3 42 0-5 9-13 13-21 13S8 42 3 33z" fill="#9a6a28"/>
    <path d="M17 26c0-2 3-2 3 0l1 6-1 8h-3v-8z" fill="#5a3d1e"/></svg>`;
  }
}
customElements.define('desk-avatar', DeskAvatar);
</script>
</body>
</html>
